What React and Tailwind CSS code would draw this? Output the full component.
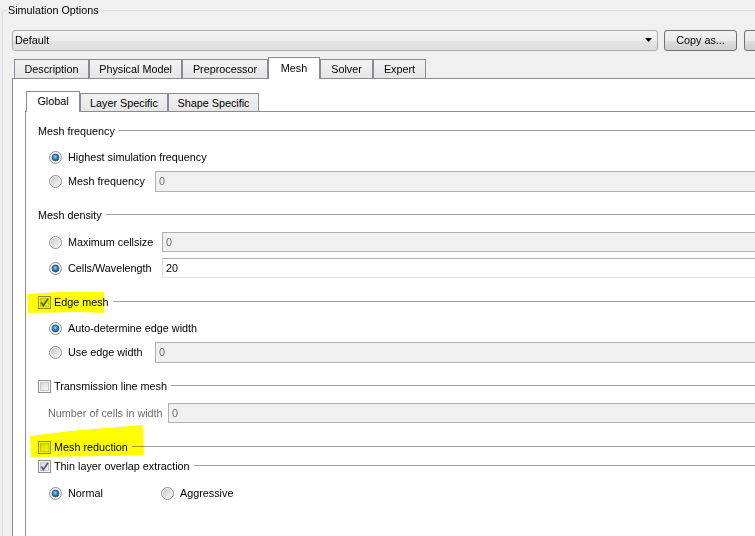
import React from "react";

// Win7-style "Simulation Options" dialog, Mesh tab

function Radio({ checked }) {
  return (
    <svg width="13" height="13" viewBox="0 0 13 13" className="shrink-0">
      <defs>
        <linearGradient id="radioFill" x1="0" y1="0" x2="1" y2="1">
          <stop offset="0" stopColor="#c9c9c9" />
          <stop offset="1" stopColor="#f7f7f7" />
        </linearGradient>
        <radialGradient id="radioDot" cx="0.45" cy="0.4" r="0.65">
          <stop offset="0" stopColor="#9fdcfb" />
          <stop offset="0.45" stopColor="#2f8bd0" />
          <stop offset="1" stopColor="#0d3d6e" />
        </radialGradient>
      </defs>
      <circle cx="6.5" cy="6.5" r="6" fill="#f5f5f5" stroke="#8e8f8f" />
      <circle cx="6.5" cy="6.5" r="4.6" fill="url(#radioFill)" />
      {checked && <circle cx="6.5" cy="6.5" r="3.4" fill="url(#radioDot)" stroke="#1d4c7a" strokeWidth="0.6" />}
    </svg>
  );
}

function Check({ checked }) {
  return (
    <svg width="13" height="13" viewBox="0 0 13 13" className="shrink-0">
      <defs>
        <linearGradient id="checkFill" x1="0" y1="0" x2="1" y2="1">
          <stop offset="0" stopColor="#d4d4d4" />
          <stop offset="1" stopColor="#fafafa" />
        </linearGradient>
      </defs>
      <rect x="0.5" y="0.5" width="12" height="12" fill="#f6f6f6" stroke="#8e8f8f" />
      <rect x="2.5" y="2.5" width="8" height="8" fill="url(#checkFill)" stroke="#c8c8c8" />
      {checked && (
        <path d="M3.2 6.6 L5.4 9.6 L10 2.8" fill="none" stroke="#4a5e95" strokeWidth="1.7" />
      )}
    </svg>
  );
}

function Line() {
  return <div className="flex-1 h-px bg-[#a0a0a0] ml-[4px] -mt-px" />;
}

function Field({ value, disabled }) {
  return (
    <div
      className={
        disabled
          ? "flex-1 h-full border border-[#adb2b5] bg-[#f0f0f0] text-[#6d6d6d] pl-[3px] flex items-center"
          : "flex-1 h-full border border-[#abadb3] border-b-[#e3e9ef] border-x-[#dbdfe6] bg-white text-black pl-[3px] flex items-center"
      }
    >
      {value}
    </div>
  );
}

const outerTabs = [
  { label: "Description", w: "w-[75px]" },
  { label: "Physical Model", w: "w-[93px]" },
  { label: "Preprocessor", w: "w-[86px]" },
  { label: "Mesh", w: "w-[52px]", active: true },
  { label: "Solver", w: "w-[53px]" },
  { label: "Expert", w: "w-[53px]" },
];

const innerTabs = [
  { label: "Global", w: "w-[54px]", active: true },
  { label: "Layer Specific", w: "w-[88px]" },
  { label: "Shape Specific", w: "w-[91px]" },
];

function TabRow({ tabs, small }) {
  return (
    <div className="flex items-end relative z-10 -mb-px">
      {tabs.map((t) =>
        t.active ? (
          <div
            key={t.label}
            className={`${t.w} ${small ? "h-[21px]" : "h-[22px]"} shrink-0 bg-white border border-b-0 border-[#898c95] flex items-center justify-center pb-px`}
          >
            {t.label}
          </div>
        ) : (
          <div
            key={t.label}
            className={`${t.w} ${small ? "h-[19px]" : "h-[20px]"} shrink-0 border border-[#898c95] bg-[linear-gradient(to_bottom,#f3f3f3,#e5e5e5)] flex items-center justify-center pt-px`}
          >
            {t.label}
          </div>
        )
      )}
    </div>
  );
}

export default function App() {
  return (
    <div className="w-[755px] h-[536px] overflow-hidden relative bg-[#f0f0f0] text-[10.8px] leading-[13px] text-black font-['Liberation_Sans',Arial,sans-serif]">
      <fieldset className="w-[820px] mt-[4px] ml-[2px] border border-[#d5dfe5] rounded-[3px] pl-[9px] pb-[40px]">
        <legend className="-ml-[5px] px-[1px] text-black">Simulation Options</legend>

        {/* preset combo + buttons */}
        <div className="flex items-center h-[21px] mt-[13px]">
          <div className="w-[646px] h-full border border-[#acacac] rounded-[3px] bg-[linear-gradient(to_bottom,#f4f4f4_0%,#eeeeee_50%,#e4e4e4_51%,#dedede_100%)] flex items-center pl-[2px] pr-[4px]">
            <span className="flex-1">Default</span>
            <svg width="8" height="5" viewBox="0 0 8 5">
              <path d="M0 0 H7 L3.5 4 Z" fill="#000" />
            </svg>
          </div>
          <div className="w-[73px] h-full ml-[6px] border border-[#707070] rounded-[3px] bg-[linear-gradient(to_bottom,#f2f2f2_0%,#ebebeb_50%,#dddddd_51%,#cfcfcf_100%)] flex items-center justify-center">
            Copy as...
          </div>
          <div className="w-[73px] h-full ml-[7px] border border-[#707070] rounded-[3px] bg-[linear-gradient(to_bottom,#f2f2f2_0%,#ebebeb_50%,#dddddd_51%,#cfcfcf_100%)]" />
        </div>

        {/* outer tabs */}
        <div className="mt-[6px] pl-[2px]">
          <TabRow tabs={outerTabs} />
        </div>
        <div className="border border-[#898c95] bg-white pl-[12px] pt-[12px] h-[470px]">
          <div className="pl-px">
            <TabRow tabs={innerTabs} small />
          </div>
          <div className="border-l border-t border-[#898c95] bg-white h-[440px] flex flex-col">
            {/* Mesh frequency */}
            <div className="flex items-center h-[14px] mt-[12px] pl-[12px]">
              <span>Mesh frequency</span>
              <Line />
            </div>
            <div className="flex items-center h-[20px] mt-[9px] pl-[23px]">
              <Radio checked />
              <span className="ml-[6px]">Highest simulation frequency</span>
            </div>
            <div className="flex items-center h-[21px] mt-[4px] pl-[23px]">
              <Radio />
              <span className="ml-[6px] w-[87px]">Mesh frequency</span>
              <Field value="0" disabled />
            </div>

            {/* Mesh density */}
            <div className="flex items-center h-[14px] mt-[16px] pl-[12px]">
              <span>Mesh density</span>
              <Line />
            </div>
            <div className="flex items-center h-[20px] mt-[10px] pl-[23px]">
              <Radio />
              <span className="ml-[6px] w-[94px]">Maximum cellsize</span>
              <Field value="0" disabled />
            </div>
            <div className="flex items-center h-[20px] mt-[6px] pl-[23px]">
              <Radio checked />
              <span className="ml-[6px] w-[94px]">Cells/Wavelength</span>
              <Field value="20" />
            </div>

            {/* Edge mesh */}
            <div className="flex items-center h-[14px] mt-[17px] pl-[12px]">
              <Check checked />
              <span className="ml-[3px]">Edge mesh</span>
              <Line />
            </div>
            <div className="flex items-center h-[20px] mt-[9px] pl-[23px]">
              <Radio checked />
              <span className="ml-[6px]">Auto-determine edge width</span>
            </div>
            <div className="flex items-center h-[21px] mt-[4px] pl-[23px]">
              <Radio />
              <span className="ml-[6px] w-[87px]">Use edge width</span>
              <Field value="0" disabled />
            </div>

            {/* Transmission line mesh */}
            <div className="flex items-center h-[14px] mt-[16px] pl-[12px]">
              <Check />
              <span className="ml-[3px]">Transmission line mesh</span>
              <Line />
            </div>
            <div className="flex items-center h-[20px] mt-[10px] pl-[22px]">
              <span className="w-[120px] text-[#6d6d6d]">Number of cells in width</span>
              <Field value="0" disabled />
            </div>

            {/* Mesh reduction */}
            <div className="flex items-center h-[14px] mt-[17px] pl-[12px]">
              <Check />
              <span className="ml-[3px]">Mesh reduction</span>
              <Line />
            </div>
            <div className="flex items-center h-[14px] mt-[5px] pl-[12px]">
              <Check checked />
              <span className="ml-[3px]">Thin layer overlap extraction</span>
              <Line />
            </div>
            <div className="flex items-center h-[20px] mt-[10px] pl-[23px]">
              <Radio checked />
              <span className="ml-[6px] w-[93px]">Normal</span>
              <Radio />
              <span className="ml-[6px]">Aggressive</span>
            </div>
          </div>
        </div>
      </fieldset>

      {/* yellow marker highlights drawn over the dialog */}
      <svg
        className="absolute left-0 top-0 pointer-events-none mix-blend-multiply"
        width="755"
        height="536"
        viewBox="0 0 755 536"
      >
        <polygon points="27,294 60,292 104,292 104,313 80,312 28,313" fill="#ffff00" />
        <polygon points="30,436 70,431 143,425 144,455 110,456 31,457" fill="#ffff00" />
      </svg>
    </div>
  );
}
